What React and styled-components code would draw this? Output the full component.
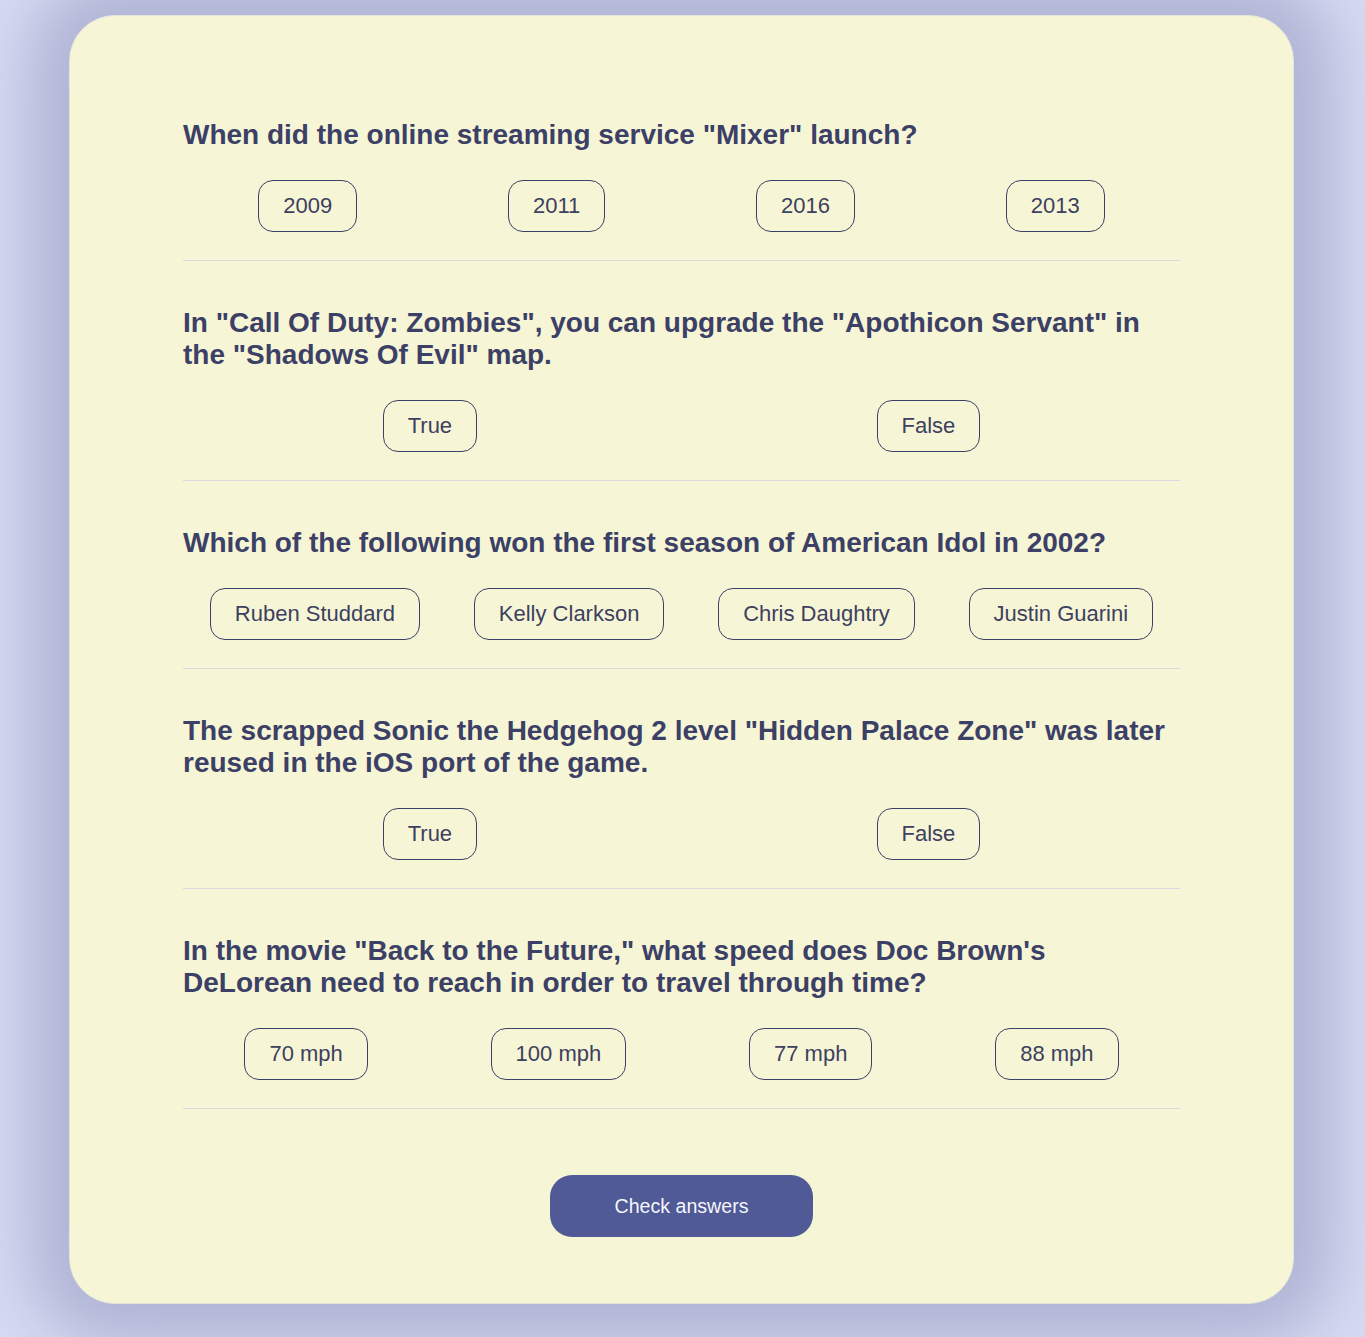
import React from "react";
import styled, { createGlobalStyle } from "styled-components";

const Global = createGlobalStyle`
  html, body { margin: 0; padding: 0; }
  body {
    background: #d6daf2;
    font-family: "Liberation Sans", Arial, sans-serif;
    overflow: hidden;
  }
`;

const Page = styled.div`
  min-height: 1337px;
  box-sizing: border-box;
  padding: 15px 0 33px 69px;
`;

const Card = styled.main`
  width: 1225px;
  box-sizing: border-box;
  background: #f6f6d6;
  border: 1px solid #e4e4dc;
  border-radius: 46px;
  padding: 57px 113px 66px;
  box-shadow: 0 0 60px 40px #b1b5d5;
`;

const Question = styled.section`
  padding: 46px 0 28px;
  border-bottom: 1px solid #dadbe0;
`;

const Title = styled.h2`
  margin: 0 0 29px;
  font-size: 28px;
  line-height: 32px;
  font-weight: 700;
  color: #3c3f66;
`;

const Answers = styled.div`
  display: flex;
  justify-content: space-around;
`;

const Answer = styled.button`
  height: 52px;
  padding: 0 24px;
  border: 1px solid #3c3f66;
  border-radius: 15px;
  background: transparent;
  font-family: "Liberation Sans", Arial, sans-serif;
  font-size: 22px;
  color: #3d405e;
  cursor: pointer;
`;

const Footer = styled.div`
  display: flex;
  justify-content: center;
  padding-top: 66px;
`;

const CheckButton = styled.button`
  width: 263px;
  height: 62px;
  border: none;
  border-radius: 22px;
  background: #4f5a97;
  color: #f6f6fb;
  font-family: "Liberation Sans", Arial, sans-serif;
  font-size: 19.6px;
  cursor: pointer;
`;

const questions = [
  {
    q: 'When did the online streaming service "Mixer" launch?',
    a: ["2009", "2011", "2016", "2013"],
  },
  {
    q: 'In "Call Of Duty: Zombies", you can upgrade the "Apothicon Servant" in the "Shadows Of Evil" map.',
    a: ["True", "False"],
  },
  {
    q: "Which of the following won the first season of American Idol in 2002?",
    a: ["Ruben Studdard", "Kelly Clarkson", "Chris Daughtry", "Justin Guarini"],
  },
  {
    q: 'The scrapped Sonic the Hedgehog 2 level "Hidden Palace Zone" was later reused in the iOS port of the game.',
    a: ["True", "False"],
  },
  {
    q: 'In the movie "Back to the Future," what speed does Doc Brown\'s DeLorean need to reach in order to travel through time?',
    a: ["70 mph", "100 mph", "77 mph", "88 mph"],
  },
];

export default function App() {
  return (
    <>
      <Global />
      <Page>
        <Card>
          {questions.map((item, i) => (
            <Question key={i}>
              <Title>{item.q}</Title>
              <Answers>
                {item.a.map((ans) => (
                  <Answer key={ans}>{ans}</Answer>
                ))}
              </Answers>
            </Question>
          ))}
          <Footer>
            <CheckButton>Check answers</CheckButton>
          </Footer>
        </Card>
      </Page>
    </>
  );
}
